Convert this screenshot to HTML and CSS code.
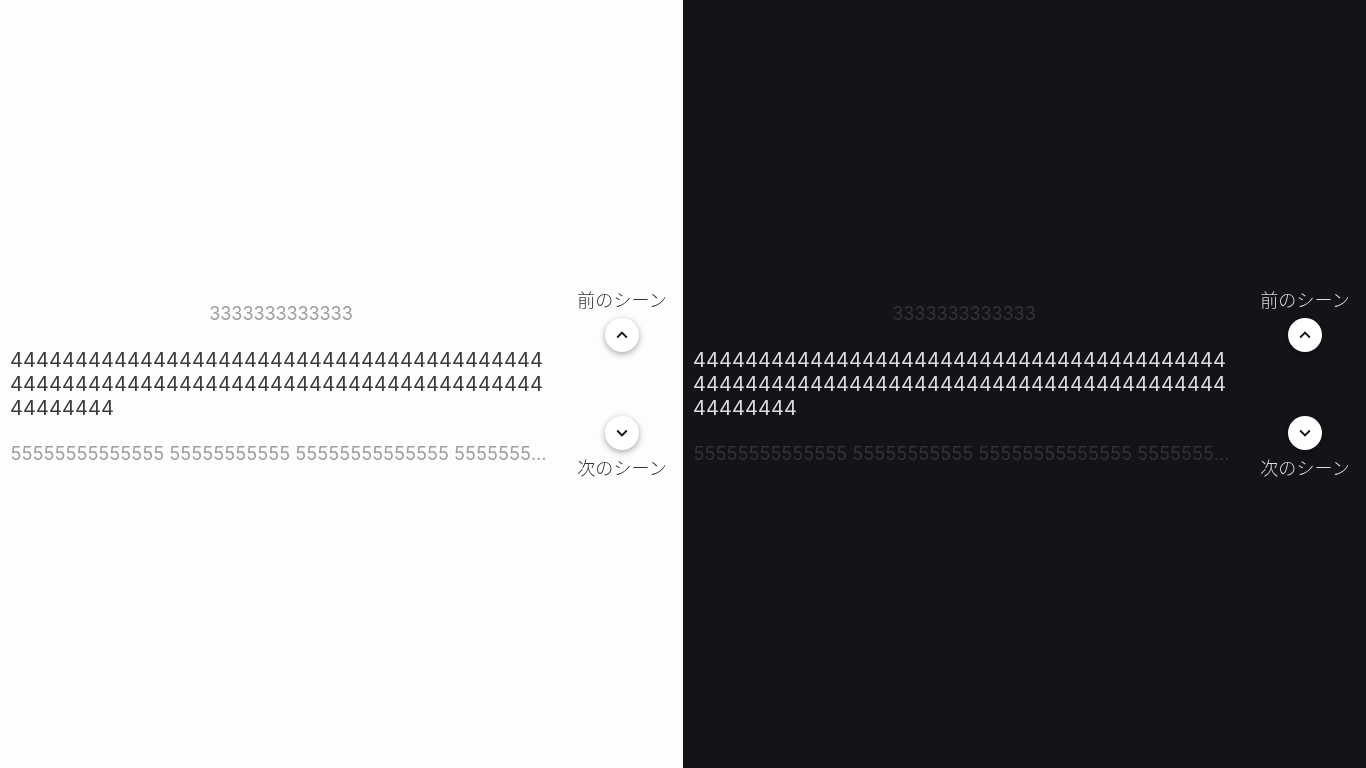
FILE: index.html
```html
<!DOCTYPE html>
<html lang="ja">
<head>
<meta charset="utf-8">
<title>Scenes</title>
<link rel="stylesheet" href="styles.css">
</head>
<body>
<div class="split">
  <section class="pane light">
    <div class="main">
      <div class="n3">3333333333333</div>
      <div class="n4">44444444444444444444444444444444444444444 44444444444444444444444444444444444444444 44444444</div>
      <div class="n5">55555555555555 55555555555 55555555555555 5555555555555555</div>
    </div>
    <div class="side">
      <div class="label">前のシーン</div>
      <button class="btn up"><svg viewBox="0 0 24 24" width="22" height="22"><path d="M12 8l-6 6 1.41 1.41L12 10.83l4.59 4.58L18 14z"/></svg></button>
      <div class="spacer"></div>
      <button class="btn down"><svg viewBox="0 0 24 24" width="22" height="22"><path d="M16.59 8.59L12 13.17 7.41 8.59 6 10l6 6 6-6z"/></svg></button>
      <div class="label">次のシーン</div>
    </div>
  </section>
  <section class="pane dark">
    <div class="main">
      <div class="n3">3333333333333</div>
      <div class="n4">44444444444444444444444444444444444444444 44444444444444444444444444444444444444444 44444444</div>
      <div class="n5">55555555555555 55555555555 55555555555555 5555555555555555</div>
    </div>
    <div class="side">
      <div class="label">前のシーン</div>
      <button class="btn up"><svg viewBox="0 0 24 24" width="22" height="22"><path d="M12 8l-6 6 1.41 1.41L12 10.83l4.59 4.58L18 14z"/></svg></button>
      <div class="spacer"></div>
      <button class="btn down"><svg viewBox="0 0 24 24" width="22" height="22"><path d="M16.59 8.59L12 13.17 7.41 8.59 6 10l6 6 6-6z"/></svg></button>
      <div class="label">次のシーン</div>
    </div>
  </section>
</div>
</body>
</html>
```
FILE: styles.css
```css
* { box-sizing: border-box; }
html, body { margin: 0; height: 100%; overflow: hidden; }
body { font-family: Inter, "Noto Sans CJK JP", sans-serif; }
.split { display: flex; height: 768px; }
.pane { width: 683px; flex: 0 0 683px; display: flex; align-items: center; padding: 0 16px 0 10px; }
.light { background: #fdfdfd; }
.dark { background: #131318; }
.main { width: 542px; flex: 0 0 542px; display: flex; flex-direction: column; will-change: transform; }
.n3 { font-size: 18px; line-height: 24px; text-align: center; color: #9e9e9e; margin: 0 0 22px 0; letter-spacing: -0.09px; }
.n4 { font-size: 20px; line-height: 24px; color: #3a3a3a; margin-bottom: 22px; width: 535px; letter-spacing: 0.08px; word-break: break-all; }
.n5 { font-size: 18px; line-height: 24px; color: #9e9e9e; width: 538px; padding-left: 0.5px; letter-spacing: 0.04px; white-space: nowrap; overflow: hidden; text-overflow: ellipsis; }
.dark .n3, .dark .n5 { color: #333337; }
.dark .n4 { color: #dcdcde; }
.side { width: 90px; flex: 0 0 90px; display: flex; flex-direction: column; align-items: center; margin-left: 25px; will-change: transform; }
.label { font-family: "Noto Sans CJK JP", sans-serif; font-size: 18px; line-height: 26px; font-weight: 300; letter-spacing: 0.1px; color: #333; white-space: nowrap; margin-top: -1px; margin-bottom: 1px; }
.btn { width: 34px; height: 34px; padding: 0; border: 0; border-radius: 50%; background: #fff; display: flex; align-items: center; justify-content: center; box-shadow: 0 2px 6px rgba(0,0,0,.35); }
.dark .label { color: #dcdcde; }
.btn.up { margin-top: 5px; }
.btn.down { margin-bottom: 5px; }
.spacer { height: 64px; }
.btn svg { fill: #16161b; }
```
